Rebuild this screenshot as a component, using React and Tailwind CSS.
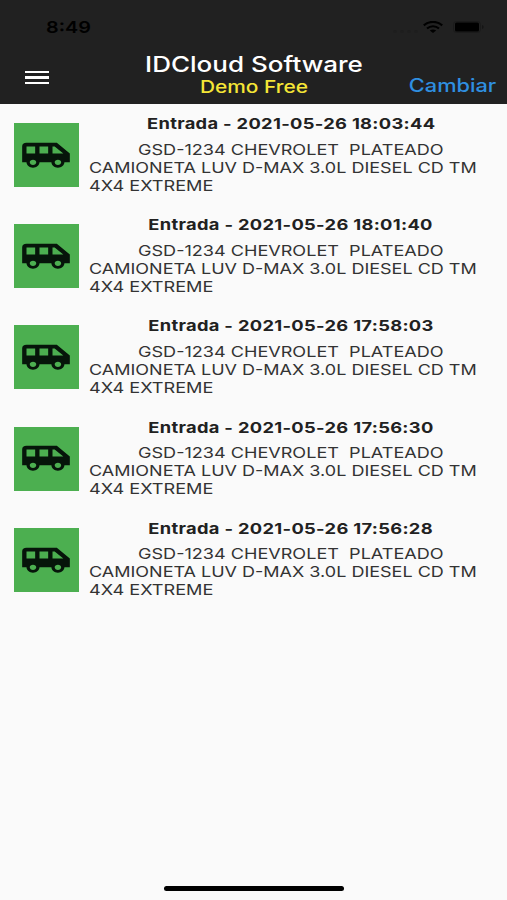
import { MdAirportShuttle } from 'react-icons/md';

const entries = [
  { id: 1, date: '2021-05-26 18:03:44' },
  { id: 2, date: '2021-05-26 18:01:40' },
  { id: 3, date: '2021-05-26 17:58:03' },
  { id: 4, date: '2021-05-26 17:56:30' },
  { id: 5, date: '2021-05-26 17:56:28' },
];

const StatusBar = () => (
  <div className="flex h-[54px] items-center justify-between pl-[46px] pr-[23px] text-black">
    <span className="inline-block origin-left scale-x-[1.2] text-[16.500px] font-semibold leading-none">8:49</span>
    <div className="flex items-center">
      {/* Cellular signal, almost invisible on the dark bar */}
      <div className="mr-[5px] mt-[8px] flex gap-[3px]">
        {[1, 2, 3, 4].map((i) => (
          <div key={i} className="h-[3px] w-[4px] rounded-full bg-[#1e1e1e]"></div>
        ))}
      </div>
      <svg className="mr-[10px] h-[12px] w-[20px]" viewBox="0 0 20 12" fill="none" stroke="currentColor" strokeWidth="2.2">
        <path d="M0.8 4.3C6 -0.2 14 -0.2 19.2 4.3" />
        <path d="M4 7.5C7.5 4.5 12.5 4.5 16 7.5" />
        <path d="M6.8 9.6C8.8 8.2 11.2 8.2 13.2 9.6L10 12Z" fill="currentColor" stroke="none" />
      </svg>
      <svg className="h-[12px] w-[31px]" viewBox="0 0 31 12">
        <rect x="0.5" y="0.5" width="27" height="11" rx="3" fill="none" stroke="#1a1a1a" />
        <rect x="2" y="1.5" width="24" height="9" rx="1.5" fill="black" />
        <path d="M29 4v4c1.2-.5 1.6-1.2 1.6-2S30.2 4.5 29 4z" fill="#151515" />
      </svg>
    </div>
  </div>
);

const Header = () => (
  <header className="h-[104px] bg-[#212121]">
    <StatusBar />
    <div className="grid h-[50px] grid-cols-[120px_1fr_120px]">
      <div className="pl-[25px] pt-[16.500px]">
        <div className="flex w-[24px] flex-col gap-[3px]">
          <div className="h-[2.500px] bg-white"></div>
          <div className="h-[2.500px] bg-white"></div>
          <div className="h-[2.500px] bg-white"></div>
        </div>
      </div>
      <div className="flex flex-col items-center whitespace-nowrap">
        <h1 className="scale-x-[1.21] text-[21.500px] font-[540] leading-[20px] text-white">IDCloud Software</h1>
        <p className="mt-[2px] scale-x-[1.23] text-[17px] font-[540] leading-[22px] text-[#f5e636]">Demo Free</p>
      </div>
      <div className="flex justify-end pr-[11px] pt-[20.500px]">
        <button className="h-[22px] origin-right scale-x-[1.21] text-[18px] font-[540] leading-[22px] text-[#2f8fe0]">Cambiar</button>
      </div>
    </div>
  </header>
);

const Entry = ({ date }) => (
  <li className="flex h-[101.200px] pl-[14px]">
    <div className="mt-[9px] flex h-[64px] w-[65px] items-center bg-[#4caf50] pl-[6px]">
      <MdAirportShuttle className="h-[42.500px] w-[52px] text-[#06150a]" preserveAspectRatio="none" />
    </div>
    <div className="ml-[10px] w-[403px] whitespace-pre text-[#333333]">
      <p className="pl-[1px] text-center text-[15px] font-bold leading-[20px] text-[#212121]">
        <span className="inline-block scale-x-[1.22] tracking-[0.26px]">Entrada - {date}</span>
      </p>
      <div className="mt-[6.500px] text-[15px] leading-[18.100px]">
        <p className="pl-[48.500px]">
          <span className="inline-block origin-left scale-x-[1.205]">GSD-1234 CHEVROLET  PLATEADO</span>
        </p>
        <p>
          <span className="inline-block origin-left scale-x-[1.2]">CAMIONETA LUV D-MAX 3.0L DIESEL CD TM</span>
        </p>
        <p>
          <span className="inline-block origin-left scale-x-[1.21]">4X4 EXTREME</span>
        </p>
      </div>
    </div>
  </li>
);

export default function App() {
  return (
    <div className="flex h-[900px] w-[507px] flex-col overflow-hidden bg-[#fafafa] font-['Inter',sans-serif]">
      <Header />
      <ul className="flex-1 pt-[10px]">
        {entries.map((entry) => (
          <Entry key={entry.id} date={entry.date} />
        ))}
      </ul>
      <div className="mx-auto mb-[9px] h-[5px] w-[180px] rounded-full bg-black"></div>
    </div>
  );
}
